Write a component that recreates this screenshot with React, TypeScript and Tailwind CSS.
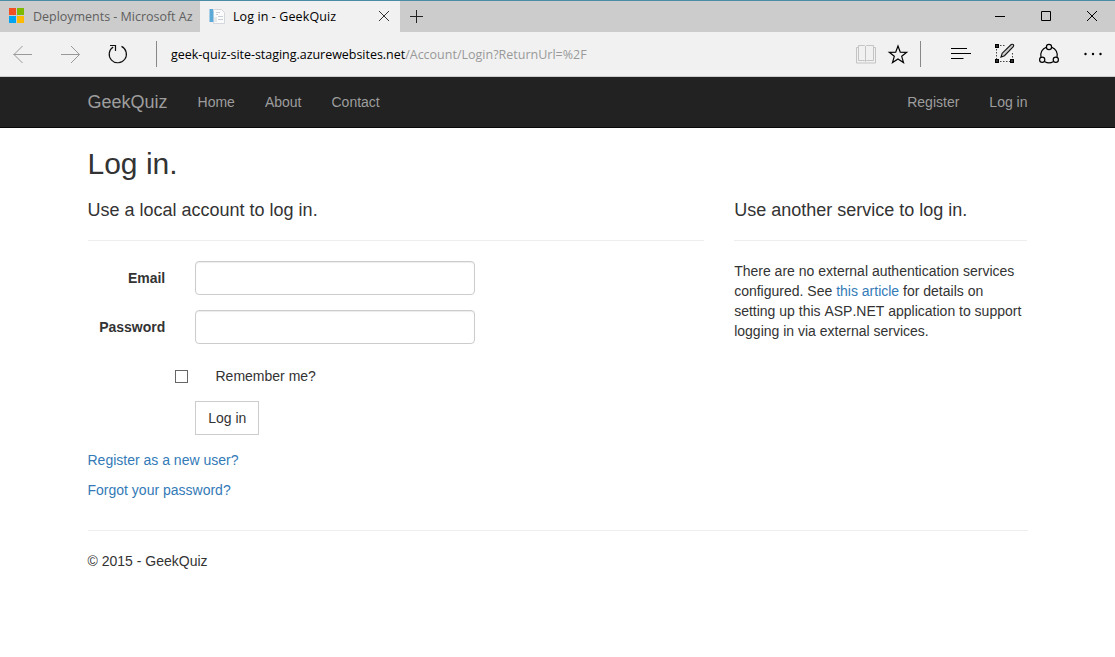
import React from "react";

function TabStrip() {
  return (
    <div className="flex h-8 border-t border-[#4a8ca4] bg-[#cccccc] font-['Open_Sans',sans-serif] text-[12.5px] leading-[31px]">
      <div className="flex w-[200px] pl-[9px] pt-[7px]">
        <svg width="15" height="15" viewBox="0 0 15 15" className="shrink-0">
          <path fill="#f25022" d="M0 0h7v7H0z" />
          <path fill="#7fba00" d="M8 0h7v7H8z" />
          <path fill="#00a4ef" d="M0 8h7v7H0z" />
          <path fill="#ffb900" d="M8 8h7v7H8z" />
        </svg>
        <span className="-mt-[7px] ml-[9px] w-[158px] whitespace-nowrap tracking-[-0.02px] text-[#5f5f5f]">
          Deployments - Microsoft Az
        </span>
      </div>
      <div className="flex w-[200px] items-start bg-[#f1f1f1] pl-[9px]">
        <svg width="16" height="16" viewBox="0 0 16 16" className="mt-[7px] shrink-0">
          <path fill="#fbfbfb" stroke="#d4d8dc" d="M4.5 1.5h8l3 3v11h-11z" />
          <path fill="#5aa9d6" d="M1 1h3v13H1z" />
          <path fill="#a8cde4" d="M0 1h1v13H0zM4 3h1v11H4z" />
          <path stroke="#c8cfd6" d="M7 4.5h4M7 6.5h2M9 8.5h5M9 11.5h5" />
          <path fill="#e6e9ec" d="M5 9h3v5H5z" />
        </svg>
        <span className="ml-[8px] w-[145px] whitespace-nowrap tracking-[0.1px] text-black">
          Log in - GeekQuiz
        </span>
        <svg width="12" height="12" viewBox="0 0 12 12" className="mt-[9px]" stroke="#333" fill="none">
          <path d="M1 1l10 10M11 1L1 11" />
        </svg>
      </div>
      <svg width="34" height="31" viewBox="0 0 34 31" stroke="#222" fill="none">
        <path d="M10 15.5h13M16.5 9v13" />
      </svg>
      <svg width="135" height="31" viewBox="0 0 135 31" className="ml-auto" stroke="#000" fill="none">
        <path d="M15 15.5h10" />
        <path d="M61.5 10.5h9v9h-9z" />
        <path d="M107 10l10 10M117 10l-10 10" />
      </svg>
    </div>
  );
}

function Toolbar() {
  return (
    <div className="flex h-[45px] border-b border-[#cccccc] bg-[#f1f1f1] font-['Open_Sans',sans-serif] text-[12.5px] leading-[45px]">
      <svg width="171" height="44" viewBox="0 0 171 44" fill="none">
        <g stroke="#999">
          <path d="M32 22.5H13.5M22.5 14l-8.5 8.5 8.5 8.5" />
          <path d="M61 22.5h18.5M71 14l8.5 8.5-8.5 8.5" />
        </g>
        <path d="M113.2 14.9A8.6 8.6 0 1 0 121.5 14.4" stroke="#111" strokeWidth="1.2" />
        <path d="M110 13.5h5.500v5.500" stroke="#111" strokeWidth="1.2" />
        <path d="M156.500 9v26" stroke="#888" />
      </svg>
      <div className="whitespace-nowrap text-black">
        <span className="tracking-[-0.03px]">geek-quiz-site-staging.azurewebsites.net</span>
        <span className="text-[#999]">/Account/Login?ReturnUrl=%2F</span>
      </div>
      <svg width="265" height="44" viewBox="850 32 265 44" className="ml-auto" fill="none" stroke="#000">
        <g stroke="#c4c4c4">
          <path d="M858.5 47.500h-2v15.500h19v-15.500h-2" />
          <path d="M858.5 45.500h6l1 1 1-1h7v15h-7l-1 1-1-1h-6zM865.500 46v15" />
        </g>
        <path strokeWidth="1.2" d="M898 46l2.300 6.100 6.400.2-5 4 1.800 6.300-5.500-3.700-5.500 3.700 1.800-6.300-5-4 6.400-.2z" />
        <path stroke="#888" d="M920.500 41v26" />
        <path d="M951 48.500h16M951 53.500h20M951 58.500h12.500" strokeWidth="1.200" />
        <g>
          <path stroke="#444" strokeDasharray="1.500 1.500" d="M1000 45.500h6M996.500 49v10M1000 61.500h10M1012.500 53v6" />
          <path fill="#000" stroke="none" d="M995 44h4v4h-4zM995 59h4v4h-4zM1010 59h4v4h-4z" />
          <path fill="#bbb" stroke="none" d="M996.500 45.500h1v1h-1zM996.500 60.500h1v1h-1zM1011.500 60.500h1v1h-1z" />
          <path fill="#ccc" stroke="#111" strokeWidth="1.100" d="M1001 57l1.200-3.800 9-8.700q1.500-.7 2.200.2t-.1 2l-8.800 9z" />
        </g>
        <g strokeWidth="1.200">
          <path d="M1046.300 47.200A8.300 8.300 0 0 0 1041 57M1051.700 47.200A8.300 8.300 0 0 1 1057 57M1044.800 61.700a8.500 8.500 0 0 0 8.400 0" />
          <circle cx="1049" cy="47" r="2.600" />
          <circle cx="1042.200" cy="59.800" r="2.600" />
          <circle cx="1055.800" cy="59.800" r="2.600" />
        </g>
        <g fill="#000" stroke="none">
          <circle cx="1085.500" cy="54" r="1.200" />
          <circle cx="1093" cy="54" r="1.200" />
          <circle cx="1100.500" cy="54" r="1.200" />
        </g>
      </svg>
    </div>
  );
}

function Navbar() {
  return (
    <nav className="h-[51px] border-b border-[#080808] bg-[#222222] text-[#9d9d9d]">
      <div className="mx-auto flex w-[940px] leading-5">
        <a className="py-[15px] pr-[15px] text-[18px]">GeekQuiz</a>
        <a className="p-[15px]">Home</a>
        <a className="p-[15px]">About</a>
        <a className="p-[15px]">Contact</a>
        <a className="ml-auto p-[15px]">Register</a>
        <a className="py-[15px] pl-[15px]">Log in</a>
      </div>
    </nav>
  );
}

function Field({ label, type }: { label: string; type: string }) {
  return (
    <div className="mb-[15px] flex">
      <label className="mr-[30px] w-[77.78px] whitespace-nowrap pt-[7px] font-bold">
        <span className="flex justify-end">{label}</span>
      </label>
      <input
        type={type}
        className="h-[34px] w-[280px] rounded border border-[#cccccc] bg-white px-3 shadow-[inset_0_1px_1px_rgba(0,0,0,0.075)] outline-none"
      />
    </div>
  );
}

export default function App() {
  return (
    <div className="h-[657px] w-[1115px] overflow-hidden bg-white font-['Liberation_Sans',sans-serif] text-[14px] leading-5 text-[#333333]">
      <TabStrip />
      <Toolbar />
      <Navbar />
      <main className="mx-auto w-[940px] pt-[19px]">
        <h2 className="text-[30px] leading-[33px]">Log in.</h2>
        <div className="flex gap-[30px] pt-[21px]">
          <section className="w-[616.67px]">
            <h4 className="text-[18px] leading-[19.8px]">Use a local account to log in.</h4>
            <hr className="mb-5 mt-[19px] border-[#eeeeee]" />
            <Field label="Email" type="text" />
            <Field label="Password" type="password" />
            <div className="mb-[15px] flex h-[27px] items-start pl-[87.5px] pt-[7px]">
              <input
                type="checkbox"
                className="mr-[27.5px] mt-[4px] h-[13px] w-[13px] appearance-none border border-[#666] bg-white"
              />
              <span>Remember me?</span>
            </div>
            <button className="mb-[15px] ml-[107.78px] block h-[34px] border border-[#cccccc] bg-white px-3">
              Log in
            </button>
            <p className="mb-[10px] text-[#337ab7]">Register as a new user?</p>
            <p className="mb-[10px] text-[#337ab7]">Forgot your password?</p>
          </section>
          <section className="w-[293.33px]">
            <h4 className="text-[18px] leading-[19.8px]">Use another service to log in.</h4>
            <hr className="mb-5 mt-[19px] border-[#eeeeee]" />
            <p className="[font-kerning:none]">
              There are no external authentication services configured. See{" "}
              <a className="text-[#337ab7]">this article</a> for details on setting up this ASP.NET
              application to support logging in via external services.
            </p>
          </section>
        </div>
        <hr className="my-5 border-[#eeeeee]" />
        <footer>© 2015 - GeekQuiz</footer>
      </main>
    </div>
  );
}
